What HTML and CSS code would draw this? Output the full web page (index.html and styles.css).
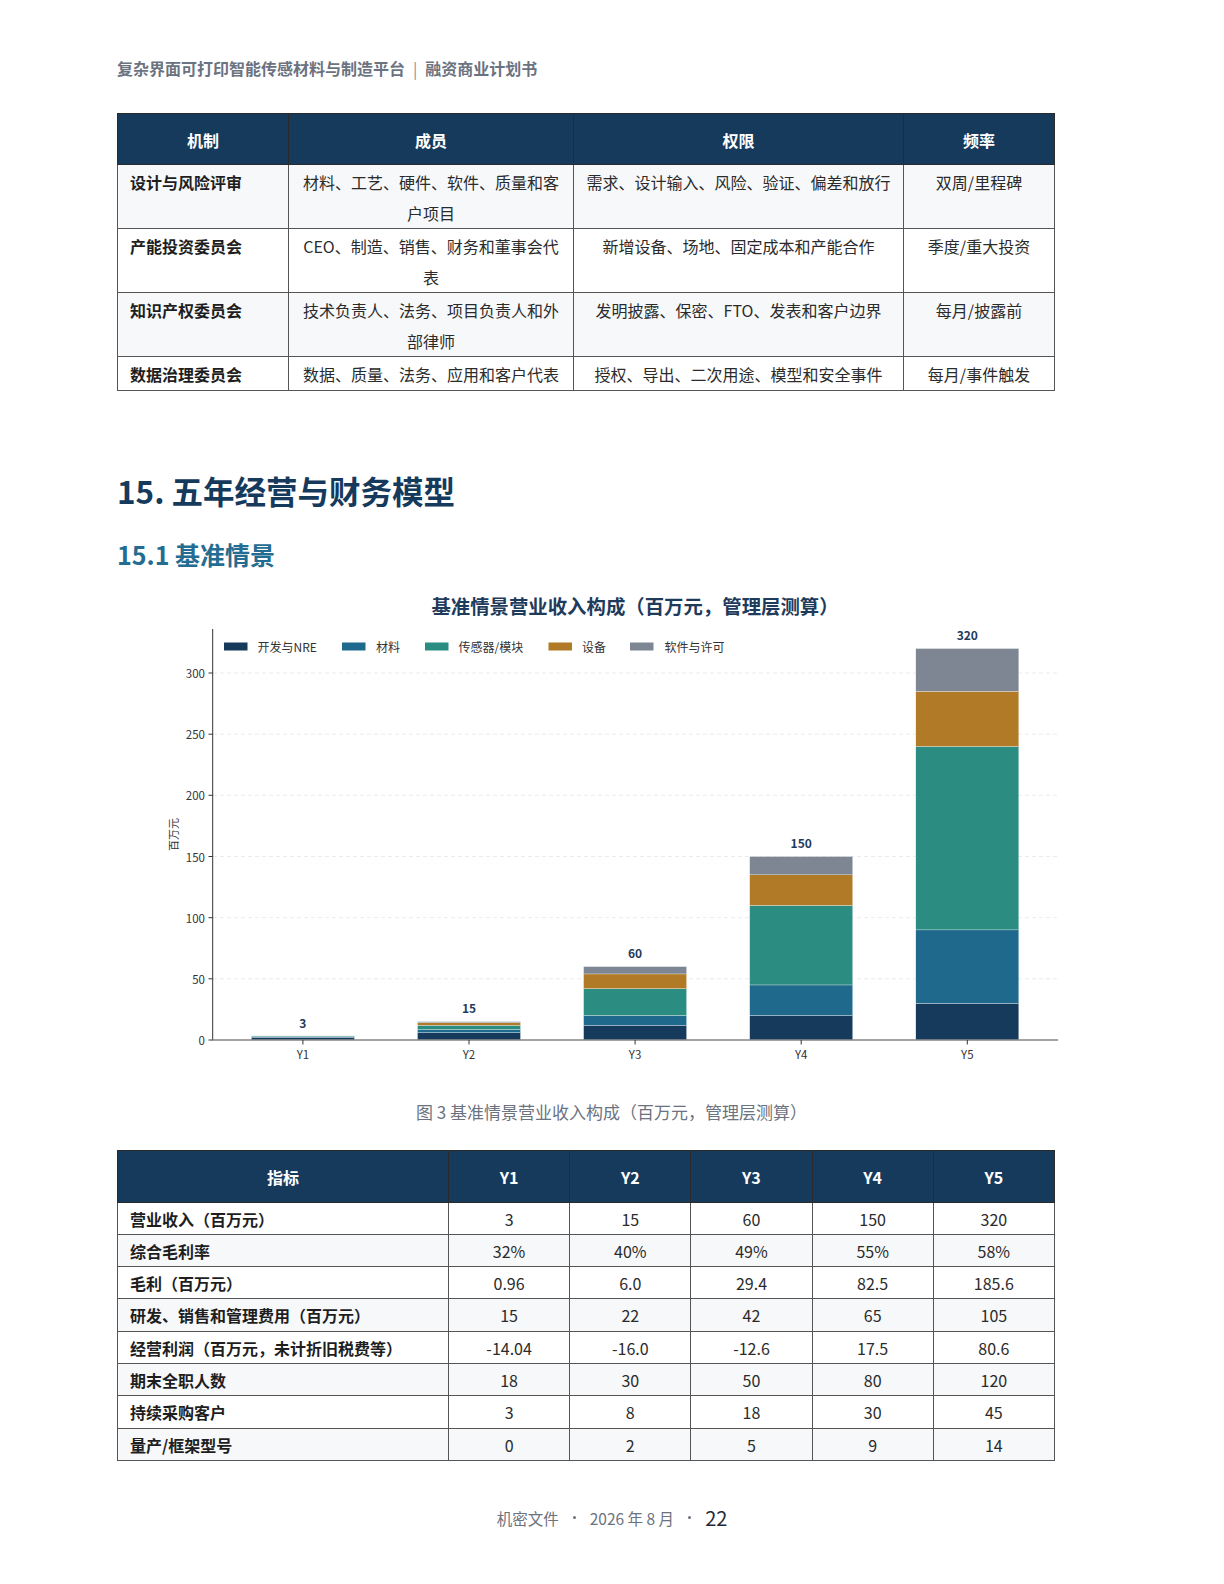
FILE: index.html
```html
<!DOCTYPE html>
<html lang="zh-CN">
<head>
<meta charset="utf-8">
<title>五年经营与财务模型</title>
<link rel="stylesheet" href="styles.css">
</head>
<body>
<div class="page">
  <div class="doc-header">复杂界面可打印智能传感材料与制造平台<span class="sep">|</span>融资商业计划书</div>

  <table class="grid-table gov">
    <colgroup>
      <col class="g1"><col class="g2"><col class="g3"><col class="g4">
    </colgroup>
    <thead>
      <tr><th>机制</th><th>成员</th><th>权限</th><th>频率</th></tr>
    </thead>
    <tbody>
      <tr class="shade"><td class="name">设计与风险评审</td><td>材料、工艺、硬件、软件、质量和客户项目</td><td>需求、设计输入、风险、验证、偏差和放行</td><td>双周/里程碑</td></tr>
      <tr><td class="name">产能投资委员会</td><td>CEO、制造、销售、财务和董事会代表</td><td>新增设备、场地、固定成本和产能合作</td><td>季度/重大投资</td></tr>
      <tr class="shade"><td class="name">知识产权委员会</td><td>技术负责人、法务、项目负责人和外部律师</td><td>发明披露、保密、FTO、发表和客户边界</td><td>每月/披露前</td></tr>
      <tr><td class="name">数据治理委员会</td><td>数据、质量、法务、应用和客户代表</td><td>授权、导出、二次用途、模型和安全事件</td><td>每月/事件触发</td></tr>
    </tbody>
  </table>

  <h1 class="h1">15. 五年经营与财务模型</h1>
  <h2 class="h2">15.1 基准情景</h2>

  <svg class="chart" width="945" height="500" viewBox="0 0 945 500">
    <text class="c-title" x="518" y="25">基准情景营业收入构成（百万元，管理层测算）</text>

    <g class="gridlines">
      <line x1="96" y1="398.8" x2="941" y2="398.8"/>
      <line x1="96" y1="337.7" x2="941" y2="337.7"/>
      <line x1="96" y1="276.5" x2="941" y2="276.5"/>
      <line x1="96" y1="215.3" x2="941" y2="215.3"/>
      <line x1="96" y1="154.2" x2="941" y2="154.2"/>
      <line x1="96" y1="93.0" x2="941" y2="93.0"/>
    </g>

    <g class="bars">
      <!-- Y1 -->
      <rect class="s1" x="134.4" y="457.2" width="103" height="2.8"/>
      <rect class="s2" x="134.4" y="456.6" width="103" height="0.6"/>
      <rect class="s3" x="134.4" y="455.9" width="103" height="0.7"/>
      <!-- Y2 -->
      <rect class="s1" x="300.5" y="452.66" width="103" height="7.34"/>
      <rect class="s2" x="300.5" y="449.60" width="103" height="3.06"/>
      <rect class="s3" x="300.5" y="445.32" width="103" height="4.28"/>
      <rect class="s4" x="300.5" y="442.57" width="103" height="2.75"/>
      <rect class="s5" x="300.5" y="441.65" width="103" height="0.92"/>
      <!-- Y3 -->
      <rect class="s1" x="466.6" y="445.32" width="103" height="14.68"/>
      <rect class="s2" x="466.6" y="435.53" width="103" height="9.79"/>
      <rect class="s3" x="466.6" y="408.62" width="103" height="26.91"/>
      <rect class="s4" x="466.6" y="393.94" width="103" height="14.68"/>
      <rect class="s5" x="466.6" y="386.60" width="103" height="7.34"/>
      <!-- Y4 -->
      <rect class="s1" x="632.7" y="435.53" width="103" height="24.47"/>
      <rect class="s2" x="632.7" y="404.95" width="103" height="30.58"/>
      <rect class="s3" x="632.7" y="325.44" width="103" height="79.51"/>
      <rect class="s4" x="632.7" y="294.85" width="103" height="30.59"/>
      <rect class="s5" x="632.7" y="276.50" width="103" height="18.35"/>
      <!-- Y5 -->
      <rect class="s1" x="798.8" y="423.30" width="103" height="36.70"/>
      <rect class="s2" x="798.8" y="349.90" width="103" height="73.40"/>
      <rect class="s3" x="798.8" y="166.41" width="103" height="183.49"/>
      <rect class="s4" x="798.8" y="111.36" width="103" height="55.05"/>
      <rect class="s5" x="798.8" y="68.54" width="103" height="42.82"/>
    </g>

    <g class="totals">
      <text x="185.9" y="442.3">3</text>
      <text x="352" y="427.7">15</text>
      <text x="518.1" y="372.6">60</text>
      <text x="684.2" y="262.5">150</text>
      <text x="850.3" y="54.5">320</text>
    </g>

    <line class="spine-l" x1="95.7" y1="49" x2="95.7" y2="460"/>
    <line class="spine-b" x1="95.2" y1="460" x2="941" y2="460"/>

    <g class="ticks">
      <line x1="91.5" y1="460" x2="95.7" y2="460"/>
      <line x1="91.5" y1="398.8" x2="95.7" y2="398.8"/>
      <line x1="91.5" y1="337.7" x2="95.7" y2="337.7"/>
      <line x1="91.5" y1="276.5" x2="95.7" y2="276.5"/>
      <line x1="91.5" y1="215.3" x2="95.7" y2="215.3"/>
      <line x1="91.5" y1="154.2" x2="95.7" y2="154.2"/>
      <line x1="91.5" y1="93.0" x2="95.7" y2="93.0"/>
      <line x1="185.9" y1="460" x2="185.9" y2="464.5"/>
      <line x1="352" y1="460" x2="352" y2="464.5"/>
      <line x1="518.1" y1="460" x2="518.1" y2="464.5"/>
      <line x1="684.2" y1="460" x2="684.2" y2="464.5"/>
      <line x1="850.3" y1="460" x2="850.3" y2="464.5"/>
    </g>

    <g class="ylabels">
      <text x="88" y="460">0</text>
      <text x="88" y="398.8">50</text>
      <text x="88" y="337.7">100</text>
      <text x="88" y="276.5">150</text>
      <text x="88" y="215.3">200</text>
      <text x="88" y="154.2">250</text>
      <text x="88" y="93.0">300</text>
    </g>
    <text class="yname" x="0" y="0" transform="translate(55.7 254.5) rotate(-90)">百万元</text>

    <g class="xlabels">
      <text x="185.9" y="474">Y1</text>
      <text x="352" y="474">Y2</text>
      <text x="518.1" y="474">Y3</text>
      <text x="684.2" y="474">Y4</text>
      <text x="850.3" y="474">Y5</text>
    </g>

    <g class="legend">
      <rect class="s1" x="107" y="62.5" width="23.5" height="8"/>
      <text x="140.5" y="66.5">开发与NRE</text>
      <rect class="s2" x="225" y="62.5" width="23.5" height="8"/>
      <text x="259" y="66.5">材料</text>
      <rect class="s3" x="308" y="62.5" width="23.5" height="8"/>
      <text x="341.5" y="66.5">传感器/模块</text>
      <rect class="s4" x="431.5" y="62.5" width="23.5" height="8"/>
      <text x="465" y="66.5">设备</text>
      <rect class="s5" x="513" y="62.5" width="23.5" height="8"/>
      <text x="547.6" y="66.5">软件与许可</text>
    </g>
  </svg>

  <div class="caption">图 3 基准情景营业收入构成（百万元，管理层测算）</div>

  <table class="grid-table fin">
    <colgroup>
      <col class="f1"><col class="fy"><col class="fy"><col class="fy"><col class="fy"><col class="fy">
    </colgroup>
    <thead>
      <tr><th>指标</th><th>Y1</th><th>Y2</th><th>Y3</th><th>Y4</th><th>Y5</th></tr>
    </thead>
    <tbody>
      <tr><td class="name">营业收入（百万元）</td><td>3</td><td>15</td><td>60</td><td>150</td><td>320</td></tr>
      <tr class="shade"><td class="name">综合毛利率</td><td>32%</td><td>40%</td><td>49%</td><td>55%</td><td>58%</td></tr>
      <tr><td class="name">毛利（百万元）</td><td>0.96</td><td>6.0</td><td>29.4</td><td>82.5</td><td>185.6</td></tr>
      <tr class="shade"><td class="name">研发、销售和管理费用（百万元）</td><td>15</td><td>22</td><td>42</td><td>65</td><td>105</td></tr>
      <tr><td class="name">经营利润（百万元，未计折旧税费等）</td><td>-14.04</td><td>-16.0</td><td>-12.6</td><td>17.5</td><td>80.6</td></tr>
      <tr class="shade"><td class="name">期末全职人数</td><td>18</td><td>30</td><td>50</td><td>80</td><td>120</td></tr>
      <tr><td class="name">持续采购客户</td><td>3</td><td>8</td><td>18</td><td>30</td><td>45</td></tr>
      <tr class="shade"><td class="name">量产/框架型号</td><td>0</td><td>2</td><td>5</td><td>9</td><td>14</td></tr>
    </tbody>
  </table>
</div>

<div class="footer">
  <span class="f-text">机密文件</span>
  <span class="dot"></span>
  <span class="f-text">2026 年 8 月</span>
  <span class="dot"></span>
  <span class="f-num">22</span>
</div>
</body>
</html>
```

FILE: styles.css
```css
body {
  margin: 0;
  background: #ffffff;
  font-family: "Noto Sans CJK SC", "Noto Sans", sans-serif;
  color: #222222;
}

.page {
  width: 937px;
  padding: 56px 0 0 117px;
}

.doc-header {
  font-size: 16px;
  line-height: 24px;
  font-weight: 700;
  color: #6b7280;
}

.sep {
  font-weight: 400;
  margin: 0 8px;
  color: #8a9099;
}

.grid-table {
  border-collapse: collapse;
  table-layout: fixed;
  width: 937px;
  font-size: 16px;
}

.grid-table th {
  background: #163a5c;
  color: #ffffff;
  font-weight: 700;
  padding: 2px 0 0;
  line-height: 48px;
  border: 1px solid #2a2a2a;
  text-align: center;
}

.grid-table td {
  border: 1px solid #555555;
  padding: 2px 12px 0;
  line-height: 30.5px;
  vertical-align: top;
  text-align: center;
  color: #2b2b2b;
  background: #ffffff;
}

.grid-table td.name {
  text-align: left;
  font-weight: 700;
  color: #1e1e1e;
}

.grid-table tr.shade td {
  background: #f6f8fa;
}

.gov {
  margin-top: 33px;
}

.g1 { width: 171px; }
.g2 { width: 285px; }
.g3 { width: 330px; }
.g4 { width: 151px; }

.f1 { width: 331px; }
.fy { width: 121.2px; }

.fin {
  margin-top: 26px;
}

.fin th {
  line-height: 49px;
}

.fin td {
  line-height: 29.3px;
}

.h1 {
  margin: 79px 0 0;
  font-size: 31.5px;
  line-height: 40px;
  font-weight: 700;
  color: #163a5c;
}

.h2 {
  margin: 28px 0 0;
  font-size: 25px;
  line-height: 32px;
  font-weight: 700;
  color: #246c91;
}

.chart {
  display: block;
  margin-top: 10px;
  overflow: visible;
  font-family: "Noto Sans CJK SC", "Noto Sans", sans-serif;
}

.c-title {
  font-size: 19.4px;
  font-weight: 700;
  fill: #1f3b5c;
  text-anchor: middle;
  dominant-baseline: central;
}

.gridlines line {
  stroke: #e4e6e9;
  stroke-width: 0.8;
  stroke-dasharray: 4 3;
}

.bars rect {
  stroke: #ffffff;
  stroke-width: 0.3;
}

.s1 { fill: #163a5c; }
.s2 { fill: #1f6a8c; }
.s3 { fill: #2b8d82; }
.s4 { fill: #b07a26; }
.s5 { fill: #7d8692; }

.totals text {
  font-size: 12px;
  font-weight: 700;
  fill: #1f3b5c;
  text-anchor: middle;
  dominant-baseline: central;
}

.spine-l {
  stroke: #333333;
  stroke-width: 1;
}

.spine-b {
  stroke: #858585;
  stroke-width: 1.6;
}

.ticks line {
  stroke: #333333;
  stroke-width: 1;
}

.ylabels text {
  font-size: 11.5px;
  fill: #333333;
  text-anchor: end;
  dominant-baseline: central;
}

.yname {
  font-size: 11px;
  fill: #333333;
  text-anchor: middle;
  dominant-baseline: central;
}

.xlabels text {
  font-size: 11.5px;
  fill: #333333;
  text-anchor: middle;
  dominant-baseline: central;
}

.legend text {
  font-size: 12px;
  fill: #333333;
  dominant-baseline: central;
}

.caption {
  margin-top: 20px;
  padding-left: 52px;
  font-size: 17px;
  line-height: 24px;
  color: #6b7280;
  text-align: center;
}

.footer {
  margin-top: 42px;
  display: flex;
  justify-content: center;
  align-items: center;
  gap: 14px;
  height: 30px;
}

.f-text {
  font-size: 15.5px;
  color: #6b7280;
}

.f-num {
  font-size: 20px;
  color: #1f2937;
}

.dot {
  width: 3px;
  height: 3px;
  border-radius: 50%;
  background: #6b7280;
}
```
